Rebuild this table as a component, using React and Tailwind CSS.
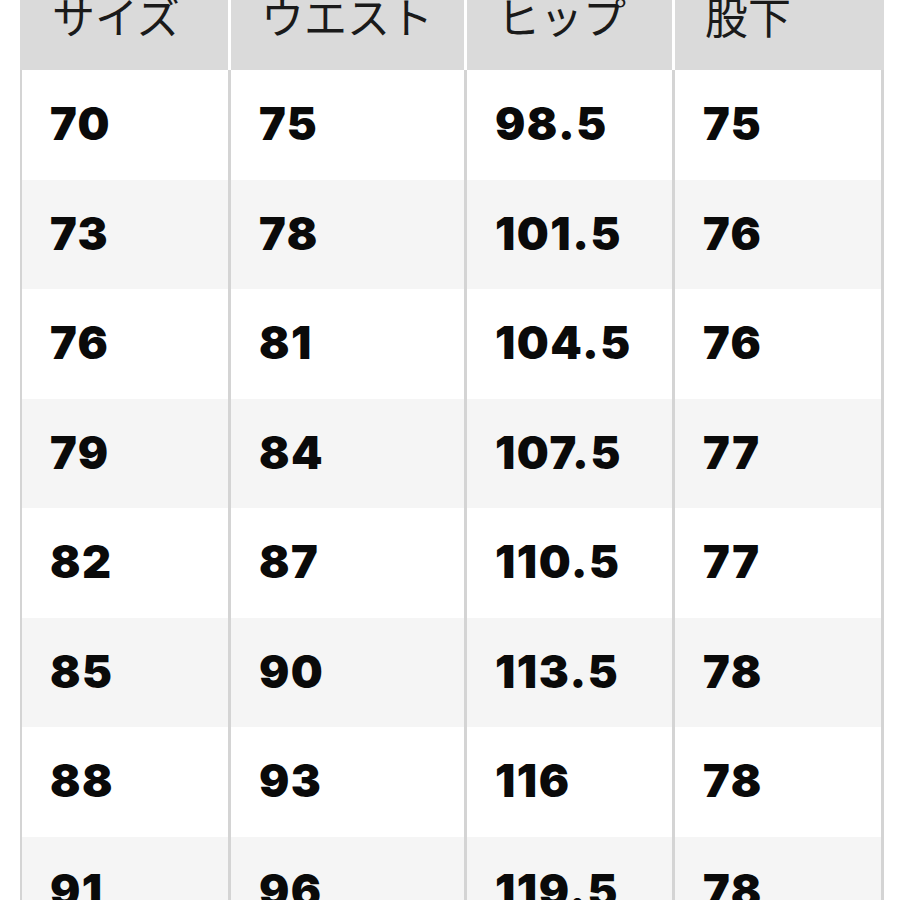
const headers = ["サイズ", "ウエスト", "ヒップ", "股下"];

const rows = [
  ["70", "75", "98.5", "75"],
  ["73", "78", "101.5", "76"],
  ["76", "81", "104.5", "76"],
  ["79", "84", "107.5", "77"],
  ["82", "87", "110.5", "77"],
  ["85", "90", "113.5", "78"],
  ["88", "93", "116", "78"],
  ["91", "96", "119.5", "78"],
];

export default function App() {
  return (
    <div className="w-[900px] h-[900px] overflow-hidden bg-white pl-[20px]">
      <div className="w-[864px]">
        <div className="grid grid-cols-[208px_233px_205px_209px] gap-[3px] bg-white h-[70px]">
          {headers.map((h, i) => (
            <div
              key={i}
              className={`bg-[#dadada] h-[70px] overflow-hidden flex items-end pb-[33px] ${i === 0 ? "pl-[32px]" : "pl-[30px]"} text-[43px] leading-none text-[#1a1a1a] font-['Noto_Sans_CJK_JP',sans-serif]`}
            >
              <span className="shrink-0 whitespace-nowrap">{h}</span>
            </div>
          ))}
        </div>
        {rows.map((r, ri) => (
          <div
            key={ri}
            className="grid grid-cols-[206px_233px_205px_206px] gap-x-[3px] bg-[#d4d4d4] pl-[2px] pr-[3px] h-[109.5px]"
          >
            {r.map((v, ci) => (
              <div
                key={ci}
                className={`${ri % 2 === 0 ? "bg-white" : "bg-[#f5f5f5]"} flex items-center pl-[28px] pb-[2px] text-[45px] leading-none tracking-[1.5px] font-black text-[#0a0a0a] font-['Inter',sans-serif]`}
              >
                {v}
              </div>
            ))}
          </div>
        ))}
      </div>
    </div>
  );
}
